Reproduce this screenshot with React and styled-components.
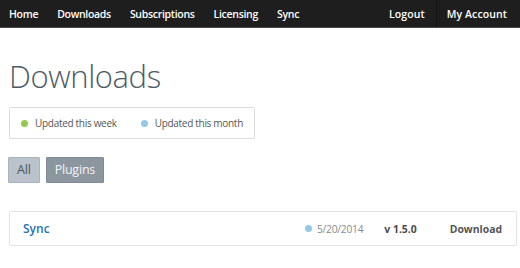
import React from "react";
import styled, { createGlobalStyle } from "styled-components";

const Global = createGlobalStyle`
  html, body { margin: 0; padding: 0; background: #fff; }
  body { font-family: "Open Sans", "Liberation Sans", sans-serif; }
  * { box-sizing: border-box; }
`;

const Nav = styled.nav`
  display: flex;
  justify-content: space-between;
  height: 28px;
  background: #1e1e1e;
  border-bottom: 1px solid #4a4a4a;
  padding: 0 4px 0 0;
`;

const NavGroup = styled.div`
  display: flex;
  align-items: stretch;
  letter-spacing: ${(p) => (p.$loose ? "0.1px" : "-0.3px")};
`;

const NavItem = styled.a`
  display: flex;
  align-items: center;
  padding: 0 ${(p) => (p.$loose ? "11px" : "9px")} 0 10px;
  color: #fff;
  font-size: 10.5px;
  font-weight: 600;
  text-decoration: none;
  border-left: ${(p) => (p.$separated ? "1px solid #141414" : "none")};
  &:first-child { padding-left: 9px; }
`;

const Main = styled.main`
  padding: 0 3px 0 9px;
`;

const Title = styled.h1`
  margin: 0;
  padding-top: 28px;
  height: 79px;
  font-size: 31px;
  font-weight: 300;
  color: #4e5b67;
  line-height: 40px;
  letter-spacing: -0.4px;
`;

const Legend = styled.div`
  display: inline-flex;
  align-items: center;
  gap: 24px;
  height: 32px;
  padding: 0 11px 0 11px;
  border: 1px solid #dcdcdc;
  border-radius: 2px;
`;

const LegendItem = styled.span`
  display: flex;
  align-items: center;
  gap: 7px;
  font-size: 10px;
  letter-spacing: -0.3px;
  color: #555;
`;

const Dot = styled.span`
  width: 7px;
  height: 7px;
  border-radius: 50%;
  background: ${(p) => p.$color};
  flex: none;
`;

const Filters = styled.div`
  display: flex;
  gap: 7px;
  margin-top: 18px;
`;

const FilterButton = styled.button`
  height: 26px;
  padding: 0 8px;
  margin-left: ${(p) => (p.$dark ? "-1px" : "-1px")};
  border: 1px solid ${(p) => (p.$dark ? "#7f8a94" : "#a9b3bc")};
  border-radius: 1px;
  background: ${(p) => (p.$dark ? "#8c969f" : "#bac3cb")};
  color: ${(p) => (p.$dark ? "#f2f4f6" : "#4a5560")};
  font-family: inherit;
  font-size: 12.5px;
  letter-spacing: -0.2px;
  line-height: 1;
`;

const Row = styled.div`
  display: flex;
  align-items: center;
  height: 35px;
  margin-top: 28px;
  padding: 0 14px 0 13px;
  border: 1px solid #e3e3e3;
  border-radius: 2px;
`;

const Name = styled.a`
  flex: 1;
  color: #1f72b8;
  font-size: 12px;
  font-weight: 600;
  text-decoration: none;
`;

const Updated = styled.span`
  display: flex;
  align-items: center;
  gap: 5px;
  font-size: 10.2px;
  letter-spacing: -0.2px;
  color: #8a8a8a;
`;

const Version = styled.span`
  margin-left: 21px;
  font-size: 10.4px;
  font-weight: 700;
  color: #4a4a4a;
`;

const DownloadLink = styled.a`
  margin-left: 33px;
  font-size: 10.4px;
  font-weight: 700;
  color: #555;
  text-decoration: none;
`;

export default function App() {
  return (
    <>
      <Global />
      <Nav>
        <NavGroup>
          <NavItem href="#">Home</NavItem>
          <NavItem href="#">Downloads</NavItem>
          <NavItem href="#">Subscriptions</NavItem>
          <NavItem href="#">Licensing</NavItem>
          <NavItem href="#">Sync</NavItem>
        </NavGroup>
        <NavGroup $loose>
          <NavItem href="#" $loose>Logout</NavItem>
          <NavItem href="#" $separated>My Account</NavItem>
        </NavGroup>
      </Nav>
      <Main>
        <Title>Downloads</Title>
        <Legend>
          <LegendItem>
            <Dot $color="#94c94a" />
            Updated this week
          </LegendItem>
          <LegendItem>
            <Dot $color="#92c9e8" />
            Updated this month
          </LegendItem>
        </Legend>
        <Filters>
          <FilterButton>All</FilterButton>
          <FilterButton $dark>Plugins</FilterButton>
        </Filters>
        <Row>
          <Name href="#">Sync</Name>
          <Updated>
            <Dot $color="#92c9e8" />
            5/20/2014
          </Updated>
          <Version>v 1.5.0</Version>
          <DownloadLink href="#">Download</DownloadLink>
        </Row>
      </Main>
    </>
  );
}
